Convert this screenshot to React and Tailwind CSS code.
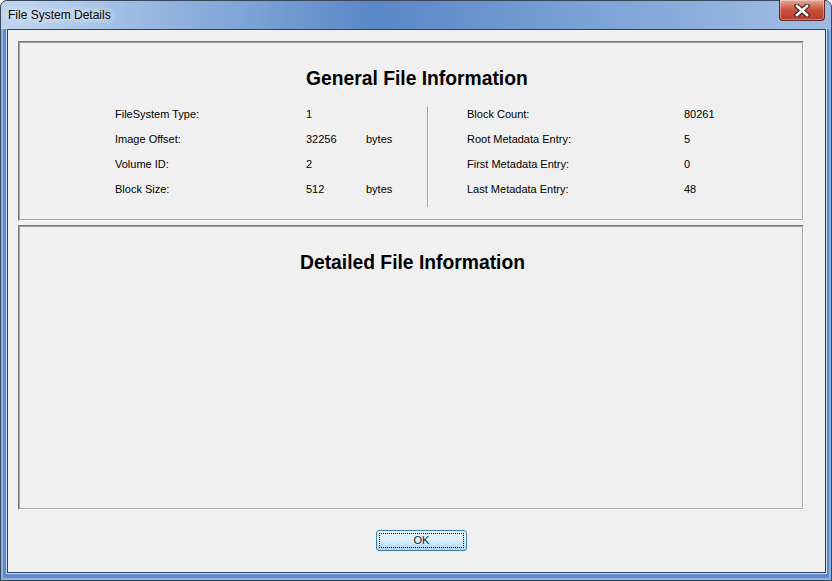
import React from "react";

function Row({ label, value, unit }) {
  return (
    <div className="flex h-[25px] leading-[14px]">
      <div className="w-[191px]">{label}</div>
      <div className="w-[60px]">{value}</div>
      <div className="w-[61px]">{unit}</div>
    </div>
  );
}

function RRow({ label, value }) {
  return (
    <div className="flex h-[25px] leading-[14px]">
      <div className="w-[217px]">{label}</div>
      <div>{value}</div>
    </div>
  );
}

function Panel({ className, children }) {
  return (
    <div className={"w-[786px] border border-t-[#7a7a7a] border-l-[#7a7a7a] border-b-white border-r-white " + className}>
      <div className="h-full border border-t-[#a0a0a0] border-l-[#a0a0a0] border-b-[#a8a8a8] border-r-[#a8a8a8]">
        {children}
      </div>
    </div>
  );
}

export default function App() {
  return (
    <div className="w-[832px] h-[581px] overflow-hidden bg-white">
      <div className="w-[832px] h-[581px] flex flex-col rounded-t-[7px] border border-[#38465a] bg-[#5f8bcb] shadow-[inset_0_0_0_2px_#8fb1dd] font-['Liberation_Sans',Arial,sans-serif] text-black relative">
        {/* title bar */}
        <div className="h-[28px] flex items-start relative rounded-t-[6px] bg-linear-to-r from-[#bcd3ee] from-[3%] via-[#5a87c7] via-[45%] to-[#9cbae2] to-[95%]">
          <div className="pl-[7px] pt-[7px] text-[12px] leading-[14px] text-black [text-shadow:0_0_6px_rgba(255,255,255,0.95),0_0_10px_rgba(255,255,255,0.8)]">
            File System Details
          </div>
          <div className="absolute right-[6px] top-[-1px] w-[46px] h-[21px] rounded-b-[4px] border border-[#5a2a24] border-t-0 bg-linear-to-b from-[#e8a898] via-[#c8503c] to-[#b33a26] shadow-[inset_0_0_0_1px_rgba(255,255,255,0.35)] flex items-center justify-center">
            <svg width="16" height="13" viewBox="0 0 16 13">
              <path d="M3 2 L13 11 M13 2 L3 11" stroke="#4a2a28" strokeWidth="5" strokeLinecap="square" />
              <path d="M3 2 L13 11 M13 2 L3 11" stroke="#ffffff" strokeWidth="2.6" strokeLinecap="square" />
            </svg>
          </div>
        </div>
        {/* client */}
        <div className="ml-[6px] mr-[5px] h-[544px] border border-[#33425a] shadow-[0_0_0_1px_#c6d8ee] bg-[#f0f0f0] pl-[10px] pt-[11px] text-[11px]">
          <Panel className="h-[180px]">
            <div className="pt-[25px] pl-[286px] text-[19.3px] font-bold leading-[22px]">
              General File Information
            </div>
            <div className="mt-[17px] flex pl-[95px]">
              <div>
                <Row label="FileSystem Type:" value="1" unit="" />
                <Row label="Image Offset:" value="32256" unit="bytes" />
                <Row label="Volume ID:" value="2" unit="" />
                <Row label="Block Size:" value="512" unit="bytes" />
              </div>
              <div className="w-px h-[100px] bg-[#a0a0a0]" />
              <div className="w-px h-[100px] bg-white" />
              <div className="pl-[38px]">
                <RRow label="Block Count:" value="80261" />
                <RRow label="Root Metadata Entry:" value="5" />
                <RRow label="First Metadata Entry:" value="0" />
                <RRow label="Last Metadata Entry:" value="48" />
              </div>
            </div>
          </Panel>
          <Panel className="h-[285px] mt-[4px]">
            <div className="pt-[25px] pl-[280px] text-[19.3px] font-bold leading-[22px]">
              Detailed File Information
            </div>
          </Panel>
          <div className="mt-[20px] ml-[358px] w-[91px] h-[21px] rounded-[3px] border border-[#3c7fb1] bg-linear-to-b from-[#eaf6fd] via-[#d9f0fc] to-[#a7d9f5] p-[2px]">
            <div className="w-full h-full border border-dotted border-black flex items-center justify-center text-[11px] leading-[13px] text-[#1b1b2f]">
              OK
            </div>
          </div>
        </div>
      </div>
    </div>
  );
}
